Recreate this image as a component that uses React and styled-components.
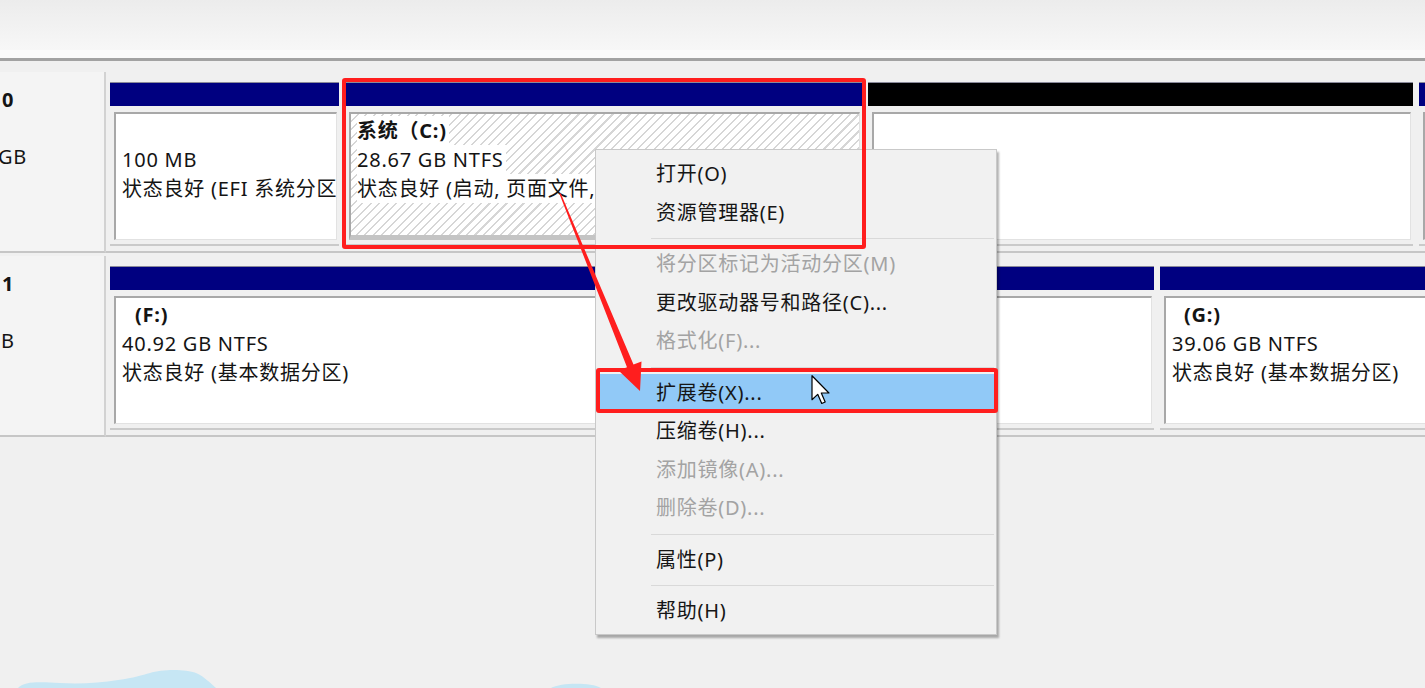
import React from "react";
import styled, { createGlobalStyle } from "styled-components";

const GlobalStyle = createGlobalStyle`
  html, body {
    margin: 0;
    padding: 0;
    background: #f0f0f0;
  }
  body {
    font-family: "Noto Sans", "Noto Sans CJK SC", sans-serif;
    overflow: hidden;
  }
`;

const Screen = styled.div`
  position: relative;
  width: 1425px;
  height: 688px;
  overflow: hidden;
  background: #f0f0f0;
  color: #141414;
  font-size: 20px;
  letter-spacing: 0.75px;
`;

const TopPane = styled.div`
  height: 50px;
  background: linear-gradient(#ececec, #f7f7f7);
`;

const Splitter = styled.div`
  height: 8px;
  background: #fafafa;
  border-bottom: 3px solid #a2a2a2;
`;

const DiskList = styled.div`
  display: flex;
  flex-direction: column;
  gap: 3px;
  padding-top: 11px;
`;

const DiskRow = styled.div`
  display: flex;
  height: 181px;
`;

const DiskLabel = styled.div`
  flex: none;
  width: 106px;
  box-sizing: border-box;
  padding: 14px 0 0 2px;
  background: #f4f4f4;
  border-right: 2px solid #d2d2d2;
  border-bottom: 2px solid #c6c6c6;
  line-height: 28.5px;
  white-space: pre;
  overflow: hidden;
`;

const LabelLine = styled.div`
  font-weight: ${(p) => (p.$bold ? 700 : 400)};
  margin-left: ${(p) => p.$shift || 0}px;
`;

const Volumes = styled.div`
  flex: 1;
  min-width: 0;
  display: flex;
  gap: 6px;
  padding: 10px 0 5px 4px;
  border-bottom: 2px solid #c6c6c6;
  overflow: hidden;
`;

const Partition = styled.div`
  flex: none;
  width: ${(p) => p.$width}px;
  box-sizing: border-box;
  display: flex;
  flex-direction: column;
  border-bottom: 2px solid #cacaca;
`;

const Bar = styled.div`
  height: 24px;
  background: ${(p) => p.$color};
  box-shadow: inset 0 1px 0 #8a8a9a;
`;

const Body = styled.div`
  flex: 1;
  min-height: 0;
  margin: 6px 2px 4px 4px;
  padding: 2px 6px 0;
  background: ${(p) =>
    p.$hatched
      ? "repeating-linear-gradient(135deg, #ffffff 0 4.5px, #d6d6d6 4.5px 6px)"
      : "#ffffff"};
  border-top: 2px solid #a8a8a8;
  border-left: 2px solid #a8a8a8;
  border-right: 1px solid #e2e2e2;
  border-bottom: ${(p) => (p.$hatched ? "5px solid #c4c4c4" : "1px solid #e2e2e2")};
  overflow: hidden;
  white-space: pre;
  line-height: 29px;
`;

const Line = styled.div`
  width: fit-content;
  background: #ffffff;
  padding-right: 2px;
  padding-left: ${(p) => p.$indent || 0}px;
  font-weight: ${(p) => (p.$bold ? 700 : 400)};
`;

const Menu = styled.div`
  position: absolute;
  left: 595px;
  top: 149px;
  width: 402px;
  box-sizing: border-box;
  padding: 5px 2px 3px;
  background: #f1f1f1;
  border: 1px solid #c9c9c9;
  box-shadow: 2px 3px 2px rgba(0, 0, 0, 0.3);
`;

const MenuItem = styled.div`
  height: 38.5px;
  line-height: 38.5px;
  padding-left: 58px;
  white-space: nowrap;
  color: ${(p) => (p.$disabled ? "#a3a3a3" : "#161616")};
  background: ${(p) => (p.$active ? "#91c9f7" : "transparent")};
`;

const MenuSeparator = styled.div`
  height: 13px;
  margin-left: 53px;
  display: flex;
  align-items: center;

  &::after {
    content: "";
    flex: 1;
    height: 1px;
    background: #d9d9d9;
  }
`;

const Callout = styled.div`
  position: absolute;
  left: ${(p) => p.$x}px;
  top: ${(p) => p.$y}px;
  width: ${(p) => p.$w}px;
  height: ${(p) => p.$h}px;
  box-sizing: border-box;
  border: 4px solid #ff1e1e;
  border-radius: 3px;
  pointer-events: none;
`;

const Overlay = styled.svg`
  position: absolute;
  left: 0;
  top: 0;
  pointer-events: none;
`;

const Pointer = styled.svg`
  position: absolute;
  left: 811px;
  top: 375px;
  pointer-events: none;
`;

const NAVY = "#000080";

const disks = [
  {
    label: [["0", true], [" "], ["GB", false, -4]],
    parts: [
      { width: 229, bar: NAVY, lines: [" ", "100 MB", "状态良好 (EFI 系统分区)"] },
      {
        width: 517,
        bar: NAVY,
        hatched: true,
        name: "系统（C:)",
        lines: ["28.67 GB NTFS", "状态良好 (启动, 页面文件, 故障转储, 基本数据分区)"],
      },
      { width: 545, bar: "#000000", lines: [] },
      { width: 200, bar: NAVY, lines: [] },
    ],
  },
  {
    label: [["1", true], [" "], ["B", false, -1]],
    parts: [
      {
        width: 1044,
        bar: NAVY,
        name: "(F:)",
        indent: 13,
        lines: ["40.92 GB NTFS", "状态良好 (基本数据分区)"],
      },
      {
        width: 300,
        bar: NAVY,
        name: "(G:)",
        indent: 12,
        lines: ["39.06 GB NTFS", "状态良好 (基本数据分区)"],
      },
    ],
  },
];

const menu = [
  { text: "打开(O)" },
  { text: "资源管理器(E)" },
  "sep",
  { text: "将分区标记为活动分区(M)", disabled: true },
  { text: "更改驱动器号和路径(C)..." },
  { text: "格式化(F)...", disabled: true },
  "sep",
  { text: "扩展卷(X)...", active: true },
  { text: "压缩卷(H)..." },
  { text: "添加镜像(A)...", disabled: true },
  { text: "删除卷(D)...", disabled: true },
  "sep",
  { text: "属性(P)" },
  "sep",
  { text: "帮助(H)" },
];

export default function App() {
  return (
    <Screen>
      <GlobalStyle />
      <TopPane />
      <Splitter />

      <DiskList>
        {disks.map((disk, i) => (
          <DiskRow key={i}>
            <DiskLabel>
              {disk.label.map(([t, bold, shift], j) => (
                <LabelLine key={j} $bold={bold} $shift={shift}>
                  {t}
                </LabelLine>
              ))}
            </DiskLabel>
            <Volumes>
              {disk.parts.map((part, j) => (
                <Partition key={j} $width={part.width}>
                  <Bar $color={part.bar} />
                  <Body $hatched={part.hatched}>
                    {part.name && (
                      <Line $bold $indent={part.indent}>
                        {part.name}
                      </Line>
                    )}
                    {part.lines.map((l, k) => (
                      <Line key={k}>{l}</Line>
                    ))}
                  </Body>
                </Partition>
              ))}
            </Volumes>
          </DiskRow>
        ))}
      </DiskList>

      <Menu>
        {menu.map((item, i) =>
          item === "sep" ? (
            <MenuSeparator key={i} />
          ) : (
            <MenuItem key={i} $disabled={item.disabled} $active={item.active}>
              {item.text}
            </MenuItem>
          )
        )}
      </Menu>

      {/* annotation layer */}
      <Callout $x={342} $y={78} $w={524} $h={171} />
      <Callout $x={596} $y={368} $w={402} $h={45} />

      <Overlay width="1425" height="688" viewBox="0 0 1425 688">
        <polygon
          fill="#ff1e1e"
          points="559.3,193.6 560.7,193.2 633.5,364.6 641.5,361.4 640,391 618.5,370.6 627,367.2"
        />
        <path
          fill="#c6e6f4"
          d="M18 688 C24 681 40 682 60 683 C80 684 100 683 118 680 C134 678 142 675 150 673 C162 669 186 669 196 673 C205 677 210 683 216 688 Z"
        />
        <path fill="#c6e6f4" d="M551 688 C560 683 590 682 601 688 Z" />
      </Overlay>

      <Pointer width="20" height="30" viewBox="0 0 13 20">
        <path
          d="M0.5 0.5 L0.5 16.5 L4.3 12.9 L7 19 L9.3 18 L6.7 12 L11.8 12 Z"
          fill="#ffffff"
          stroke="#000000"
          strokeWidth="0.8"
          strokeLinejoin="round"
        />
      </Pointer>
    </Screen>
  );
}
